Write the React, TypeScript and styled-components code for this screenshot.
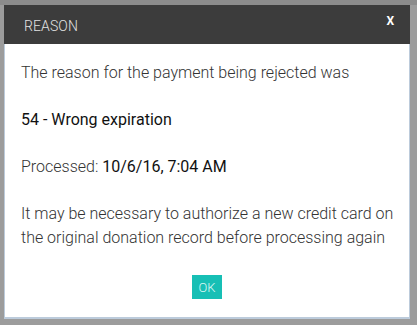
import React from 'react';
import styled, { createGlobalStyle } from 'styled-components';

const GlobalStyle = createGlobalStyle`
  html, body {
    margin: 0;
    padding: 0;
    background: #9b9b9b;
    font-family: Roboto, "Liberation Sans", Arial, sans-serif;
    overflow: hidden;
  }
`;

const Backdrop = styled.div`
  width: 417px;
  height: 325px;
  box-sizing: border-box;
  padding: 5px 7px 0 4px;
  background: linear-gradient(#8c8c8c 0, #8c8c8c 5px, #9c9c9c 5px);
`;

const ModalWrapper = styled.div`
  width: 406px;
  display: flex;
  flex-direction: column;
`;

const Header = styled.div`
  height: 39px;
  background: #3c3c3c;
  display: flex;
  align-items: center;
  justify-content: space-between;
  padding: 0 16px 0 20px;

  h1 {
    margin: 2px 0 0;
    font-size: 14px;
    font-weight: 300;
    color: #e2e2e2;
    letter-spacing: 0.1px;
  }
`;

const CloseButton = styled.button`
  border: 0;
  background: none;
  padding: 0;
  margin-top: -7px;
  color: #fff;
  font-family: Roboto, "Liberation Sans", Arial, sans-serif;
  font-size: 12px;
  font-weight: 700;
  cursor: pointer;
`;

const Content = styled.div`
  background: #fff;
  border: 1px solid #bccbdb;
  border-top: 0;
  border-bottom-width: 2px;
  padding: 17px 8px 18px 16px;
  display: flex;
  flex-direction: column;
`;

const Text = styled.p<{ $strong?: boolean }>`
  margin: 0 0 23px;
  font-size: 16px;
  line-height: 24px;
  font-weight: ${(p) => (p.$strong ? 400 : 300)};
  color: ${(p) => (p.$strong ? '#111' : '#333')};
`;

const Value = styled.span`
  font-weight: 400;
  color: #111;
`;

const Footer = styled.div`
  display: flex;
  justify-content: center;
  margin-top: 2px;
  padding-right: 8px;
`;

const OkButton = styled.button`
  width: 30px;
  height: 24px;
  border: 0;
  padding: 0;
  background: #17bfb5;
  color: #d9f6f3;
  font-family: Roboto, "Liberation Sans", Arial, sans-serif;
  font-size: 13px;
  font-weight: 300;
  cursor: pointer;
`;

export default function App() {
  return (
    <>
      <GlobalStyle />
      <Backdrop>
        <ModalWrapper>
          <Header>
            <h1>REASON</h1>
            <CloseButton type="button">X</CloseButton>
          </Header>
          <Content>
            <Text>The reason for the payment being rejected was</Text>
            <Text $strong>54 - Wrong expiration</Text>
            <Text>
              Processed: <Value>10/6/16, 7:04 AM</Value>
            </Text>
            <Text>
              It may be necessary to authorize a new credit card on the original
              donation record before processing again
            </Text>
            <Footer>
              <OkButton type="button">OK</OkButton>
            </Footer>
          </Content>
        </ModalWrapper>
      </Backdrop>
    </>
  );
}
